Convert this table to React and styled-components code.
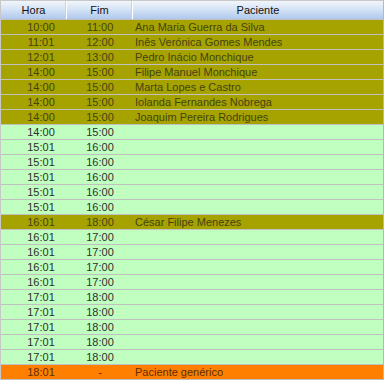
import styled, { createGlobalStyle } from "styled-components";

const rows = [
  ["10:00", "11:00", "Ana Maria Guerra da Silva", "busy"],
  ["11:01", "12:00", "Inês Verónica Gomes Mendes", "busy"],
  ["12:01", "13:00", "Pedro Inácio Monchique", "busy"],
  ["14:00", "15:00", "Filipe Manuel Monchique", "busy"],
  ["14:00", "15:00", "Marta Lopes e Castro", "busy"],
  ["14:00", "15:00", "Iolanda Fernandes Nobrega", "busy"],
  ["14:00", "15:00", "Joaquim Pereira Rodrigues", "busy"],
  ["14:00", "15:00", "", "free"],
  ["15:01", "16:00", "", "free"],
  ["15:01", "16:00", "", "free"],
  ["15:01", "16:00", "", "free"],
  ["15:01", "16:00", "", "free"],
  ["15:01", "16:00", "", "free"],
  ["16:01", "18:00", "César Filipe Menezes", "busy"],
  ["16:01", "17:00", "", "free"],
  ["16:01", "17:00", "", "free"],
  ["16:01", "17:00", "", "free"],
  ["16:01", "17:00", "", "free"],
  ["17:01", "18:00", "", "free"],
  ["17:01", "18:00", "", "free"],
  ["17:01", "18:00", "", "free"],
  ["17:01", "18:00", "", "free"],
  ["17:01", "18:00", "", "free"],
  ["18:01", "-", "Paciente genérico", "generic"],
];

const palette = {
  busy: { bg: "#a6a200", fg: "#45440f" },
  free: { bg: "#c0ffc0", fg: "#2e2e2e" },
  generic: { bg: "#ff8000", fg: "#5e2c00" },
};

const GlobalStyle = createGlobalStyle`
  body {
    margin: 0;
    background: #ffffff;
    font-family: "Liberation Sans", Arial, sans-serif;
    font-size: 11px;
  }
`;

const Grid = styled.div`
  width: 384px;
  box-sizing: border-box;
  border-left: 1px solid #c8c8c8;
  border-right: 1px solid #b8b8b8;
  border-top: 1px solid #c8c8c8;
`;

const HeaderRow = styled.div`
  display: grid;
  grid-template-columns: 65px 1px 65px 1px 1fr;
  height: 18px;
  border-bottom: 1px solid #c0c0c0;
  background: linear-gradient(to bottom, #f2f6fc 0%, #d6e4f6 45%, #aec8ec 100%);
`;

const HeadCell = styled.div`
  display: flex;
  align-items: center;
  justify-content: center;
  color: #111111;
`;

const Divider = styled.div`
  background: #ffffff;
  box-shadow: -1px 0 0 #c4d2e6;
`;

const Row = styled.div`
  display: grid;
  grid-template-columns: 66px 66px 1fr;
  height: 14px;
  line-height: 14px;
  border-bottom: 1px solid #c0c0c0;
  background: ${(p) => palette[p.$kind].bg};
  color: ${(p) => palette[p.$kind].fg};
`;

const TimeCell = styled.div`
  text-align: center;
  padding-left: ${(p) => (p.$first ? "14px" : "0")};
`;

const NameCell = styled.div`
  padding-left: 2px;
  white-space: nowrap;
  overflow: hidden;
`;

export default function App() {
  return (
    <>
      <GlobalStyle />
      <Grid>
        <HeaderRow>
          <HeadCell>Hora</HeadCell>
          <Divider />
          <HeadCell>Fim</HeadCell>
          <Divider />
          <HeadCell>Paciente</HeadCell>
        </HeaderRow>
        {rows.map(([start, end, name, kind], i) => (
          <Row key={i} $kind={kind}>
            <TimeCell $first>{start}</TimeCell>
            <TimeCell>{end}</TimeCell>
            <NameCell>{name}</NameCell>
          </Row>
        ))}
      </Grid>
    </>
  );
}
